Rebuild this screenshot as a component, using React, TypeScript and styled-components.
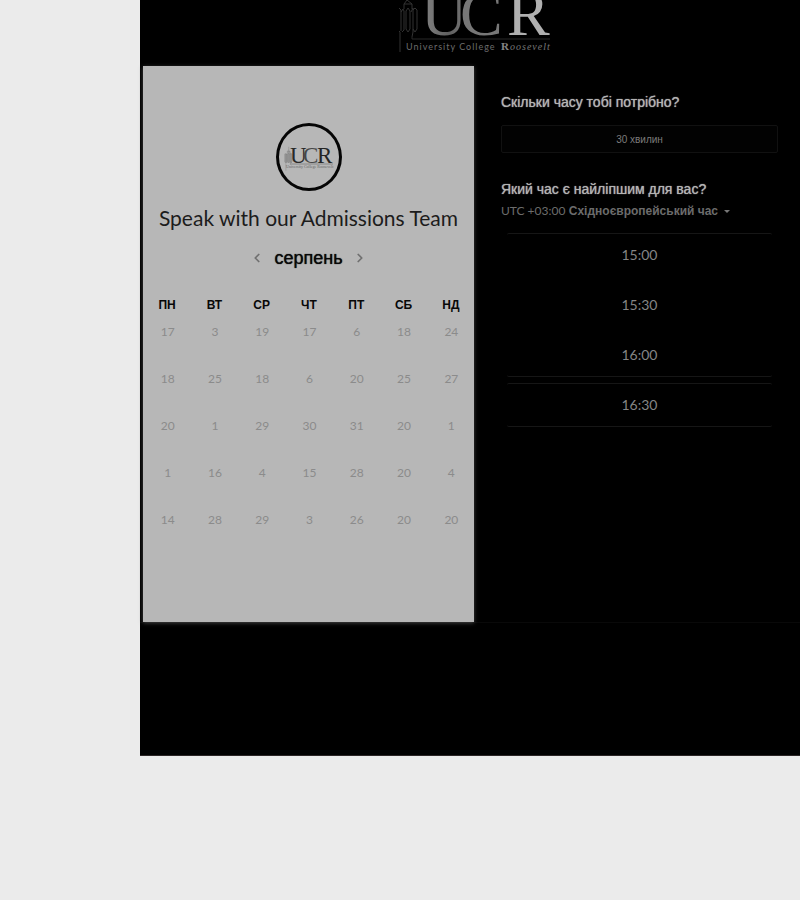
import React from "react";
import styled, { createGlobalStyle } from "styled-components";
import { ChevronLeft, ChevronRight } from "lucide-react";

const GlobalStyle = createGlobalStyle`
  *, *::before, *::after { box-sizing: border-box; }
  body {
    margin: 0;
    background: #ebebeb;
    font-family: "Liberation Sans", Arial, sans-serif;
  }
  h1, h2, p { margin: 0; font-weight: 400; }
  button { margin: 0; padding: 0; font: inherit; cursor: pointer; }
`;

const Page = styled.div`
  min-height: 100vh;
  padding-left: 140px;
  background: #ebebeb;
`;

const Frame = styled.main`
  padding-bottom: 132px;
  background: #000;
  border-bottom: 1px solid #2b2525;
`;

const Header = styled.header`
  display: flex;
  justify-content: center;
  height: 66px;
  overflow: hidden;
  padding-left: 18px;
`;

const Scheduler = styled.div`
  display: grid;
  grid-template-columns: minmax(0, 331fr) minmax(0, 326fr);
  padding-left: 3px;
  border-bottom: 1px solid #090909;
`;

const CalendarPanel = styled.section`
  display: flex;
  flex-direction: column;
  align-items: center;
  min-height: 556px;
  padding-top: 57px;
  background: #b7b7b7;
  box-shadow: 0 1px 4px #444;
`;

const Avatar = styled.div`
  display: flex;
  width: 66px;
  height: 68px;
  border: 3px solid #050505;
  border-radius: 50%;
`;

const Title = styled.h1`
  margin-top: 12px;
  color: #1c1c1c;
  font-family: Lato, sans-serif;
  font-size: 21px;
  line-height: 30px;
  white-space: nowrap;
`;

const MonthBar = styled.div`
  display: flex;
  align-items: center;
  justify-content: center;
  gap: 8px;
  margin-top: 10px;
`;

const Month = styled.h2`
  color: #080808;
  font-size: 18px;
  line-height: 30px;
  text-shadow: 0 0 1px #080808;
`;

const MonthButton = styled.button`
  display: flex;
  align-items: center;
  justify-content: center;
  width: 18px;
  height: 28px;
  border: 0;
  background: none;
  color: #707070;
`;

const Calendar = styled.table`
  width: 100%;
  margin-top: 22px;
  border-collapse: collapse;
  table-layout: fixed;
  text-align: center;
`;

const Weekday = styled.th`
  height: 27px;
  padding: 0 0 0 1px;
  vertical-align: top;
  color: #080808;
  font-size: 12px;
  line-height: 20px;
`;

const Day = styled.td`
  height: 47px;
  padding: 0 0 0 2px;
  vertical-align: top;
`;

const DayButton = styled.button`
  width: 100%;
  border: 0;
  background: none;
  color: #8b8b8b;
  font-family: Lato, sans-serif;
  font-size: 12px;
  line-height: 20px;
`;

const TimePanel = styled.section`
  padding: 26px 22px 0 27px;
`;

const Question = styled.h2`
  color: #b4b4b4;
  font-size: 14px;
  line-height: 20px;
  text-shadow: 0 0 1px #b4b4b4;
`;

const DurationButton = styled.button`
  display: block;
  width: 100%;
  height: 28px;
  margin: 13px 0 26px;
  border: 1px solid #111;
  border-radius: 2px;
  background: #020202;
  color: #7c7c7c;
  font-size: 10px;
`;

const ZoneButton = styled.button`
  display: flex;
  align-items: center;
  gap: 6px;
  margin-top: 2px;
  border: 0;
  background: none;
  color: #6c6c6c;
  font-size: 12px;
  font-weight: 700;
  line-height: 20px;
  white-space: nowrap;
`;

const Offset = styled.span`
  font-family: Lato, sans-serif;
  font-weight: 400;
`;

const Caret = styled.span`
  border: 3px solid transparent;
  border-top-color: #777;
  border-bottom: 0;
`;

const Slots = styled.div`
  display: flex;
  flex-direction: column;
  gap: 6px;
  margin-top: 12px;
  padding: 0 6px;
`;

const Slot = styled.button<{ $top?: boolean; $bottom?: boolean }>`
  height: 44px;
  padding-bottom: 2px;
  border: 0 solid #000;
  border-top: 1px solid ${(p) => (p.$top ? "#161616" : "#000")};
  border-bottom: 1px solid ${(p) => (p.$bottom ? "#161616" : "#000")};
  border-radius: 2px;
  background: #000;
  color: #858585;
  font-family: Lato, sans-serif;
  font-size: 14px;
`;

const weekdays = ["ПН", "ВТ", "СР", "ЧТ", "ПТ", "СБ", "НД"];
const weeks = [
  [17, 3, 19, 17, 6, 18, 24],
  [18, 25, 18, 6, 20, 25, 27],
  [20, 1, 29, 30, 31, 20, 1],
  [1, 16, 4, 15, 28, 20, 4],
  [14, 28, 29, 3, 26, 20, 20],
];
const slots = [
  { time: "15:00", top: true },
  { time: "15:30" },
  { time: "16:00", bottom: true },
  { time: "16:30", top: true, bottom: true },
];

const Tower = ({ color }: { color: string }) => (
  <g fill="none" stroke={color} strokeWidth="1">
    <path d="M8 52V32L5 29V10L7 8L9 10V31M9 12L11 9L12 11V30L10 32" />
    <path d="M12 9V4L15 0L20 4V9M12 4H20M14 11L16 8L18 11V29L16 32L14 29ZM16 0V-8" />
    <path d="M19 12L21 8V32L20 37M21 10L23 8L25 10V29L23 32L21 29" />
  </g>
);

const HeaderLogo = () => (
  <svg width="160" height="66" viewBox="0 0 160 66" role="img" aria-label="University College Roosevelt">
    <defs>
      <linearGradient id="letters" x1="0" x2="1">
        <stop offset="0" stopColor="#858585" />
        <stop offset="0.6" stopColor="#606060" />
        <stop offset="1" stopColor="#777" />
      </linearGradient>
    </defs>
    <g transform="translate(-7 0)">
      <Tower color="#333" />
      <path d="M20 37V39H158" fill="none" stroke="#292929" />
    </g>
    <g fontFamily="Liberation Serif, serif" fontSize="64">
      <text x="22" y="35" fill="url(#letters)">U</text>
      <text x="61" y="35" fill="#777">C</text>
      <text x="108" y="35" fill="#b0b0b0">R</text>
    </g>
    <text x="7" y="50" fill="#6c6c6c" fontFamily="Lato, sans-serif" fontSize="9" letterSpacing="1">University College</text>
    <text x="102" y="50" fill="#858585" fontFamily="Liberation Serif, serif" fontSize="11" fontWeight="700">R</text>
    <text x="111" y="50" fill="#777" fontFamily="Liberation Serif, serif" fontSize="10" fontStyle="italic" letterSpacing="1">oosevelt</text>
  </svg>
);

const AvatarLogo = () => (
  <svg width="60" height="62" viewBox="0 0 60 62" role="img" aria-label="UCR">
    <g transform="translate(4 24) scale(0.36 0.4)">
      <g fill="#999">
        <path d="M5 10H12V32H5ZM13 4L16 0L19 4V32H13ZM20 10H25V32H20Z" />
      </g>
      <Tower color="#777" />
    </g>
    <g fontFamily="Liberation Serif, serif" fontSize="23">
      <text x="11" y="37" fill="#292929">U</text>
      <text x="24" y="37" fill="#484848">C</text>
      <text x="38" y="37" fill="#242424">R</text>
    </g>
    <path d="M11 38H54" stroke="#888" />
    <text x="7" y="42" fill="#666" fontFamily="Liberation Serif, serif" fontSize="4">University College Roosevelt</text>
  </svg>
);

export default function App() {
  return (
    <Page>
      <GlobalStyle />
      <Frame>
        <Header>
          <HeaderLogo />
        </Header>
        <Scheduler>
          <CalendarPanel>
            <Avatar>
              <AvatarLogo />
            </Avatar>
            <Title>Speak with our Admissions Team</Title>
            <MonthBar>
              <MonthButton aria-label="Попередній місяць">
                <ChevronLeft size={14} strokeWidth={3} />
              </MonthButton>
              <Month>серпень</Month>
              <MonthButton aria-label="Наступний місяць">
                <ChevronRight size={14} strokeWidth={3} />
              </MonthButton>
            </MonthBar>
            <Calendar>
              <thead>
                <tr>
                  {weekdays.map((d) => (
                    <Weekday key={d} scope="col">{d}</Weekday>
                  ))}
                </tr>
              </thead>
              <tbody>
                {weeks.map((week, i) => (
                  <tr key={i}>
                    {week.map((d, j) => (
                      <Day key={j}>
                        <DayButton>{d}</DayButton>
                      </Day>
                    ))}
                  </tr>
                ))}
              </tbody>
            </Calendar>
          </CalendarPanel>
          <TimePanel>
            <Question>Скільки часу тобі потрібно?</Question>
            <DurationButton>30 хвилин</DurationButton>
            <Question>Який час є найліпшим для вас?</Question>
            <ZoneButton>
              <span>
                <Offset>UTC +03:00</Offset> Східноєвропейський час
              </span>
              <Caret />
            </ZoneButton>
            <Slots>
              {slots.map((s) => (
                <Slot key={s.time} $top={s.top} $bottom={s.bottom}>{s.time}</Slot>
              ))}
            </Slots>
          </TimePanel>
        </Scheduler>
      </Frame>
    </Page>
  );
}
